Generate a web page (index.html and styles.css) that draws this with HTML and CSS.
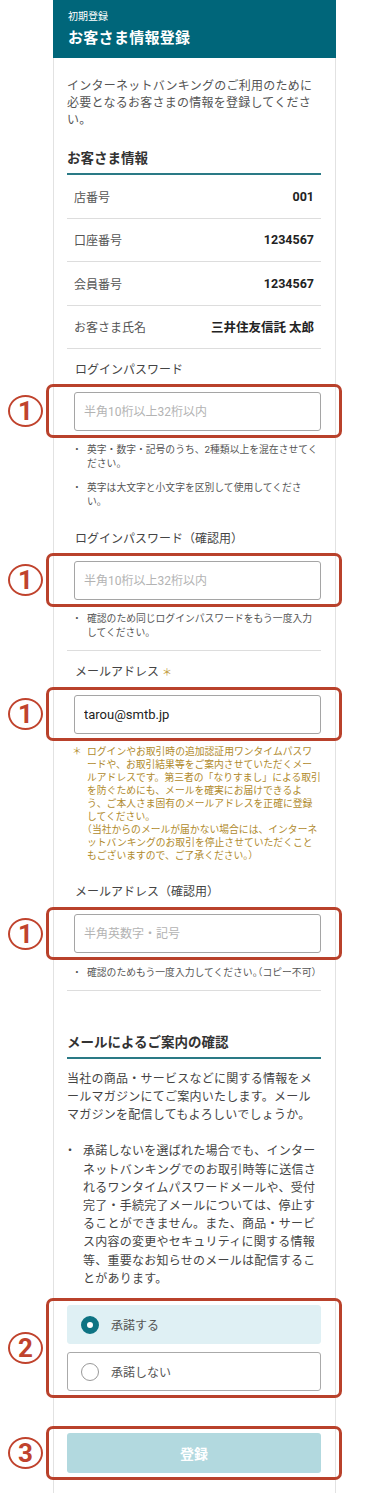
FILE: index.html
```html
<!DOCTYPE html>
<html lang="ja">
<head>
    <meta charset="UTF-8">
    <meta name="viewport" content="width=device-width, initial-scale=1.0">
    <title>お客さま情報登録</title>
    <link rel="stylesheet" href="styles.css">
</head>
<body>
    <div class="panel">
        <div class="panel-head">
            <p class="head-sub">初期登録</p>
            <h1 class="head-title">お客さま情報登録</h1>
        </div>

        <div class="panel-body">
            <p class="intro">インターネットバンキングのご利用のために必要となるお客さまの情報を登録してください。</p>

            <h2 class="sec-title">お客さま情報</h2>
            <dl class="info">
                <div class="info-row"><dt>店番号</dt><dd>001</dd></div>
                <div class="info-row"><dt>口座番号</dt><dd>1234567</dd></div>
                <div class="info-row"><dt>会員番号</dt><dd>1234567</dd></div>
                <div class="info-row"><dt>お客さま氏名</dt><dd>三井住友信託 太郎</dd></div>
            </dl>

            <div class="field-block">
                <div class="field">
                    <label class="field-label" for="pw">ログインパスワード</label>
                    <div class="mark">
                        <span class="mark-no">1</span>
                        <input class="text-input" type="password" id="pw" placeholder="半角10桁以上32桁以内">
                    </div>
                    <ul class="notes">
                        <li><span class="dot">・</span><span>英字・数字・記号のうち、2種類以上を混在させてください。</span></li>
                        <li><span class="dot">・</span><span>英字は大文字と小文字を区別して使用してください。</span></li>
                    </ul>
                </div>
                <div class="field">
                    <label class="field-label" for="pw2">ログインパスワード（確認用）</label>
                    <div class="mark">
                        <span class="mark-no">1</span>
                        <input class="text-input" type="password" id="pw2" placeholder="半角10桁以上32桁以内">
                    </div>
                    <ul class="notes">
                        <li><span class="dot">・</span><span>確認のため同じログインパスワードをもう一度入力してください。</span></li>
                    </ul>
                </div>
            </div>

            <div class="field-block">
                <div class="field">
                    <label class="field-label" for="mail">メールアドレス <span class="req">＊</span></label>
                    <div class="mark">
                        <span class="mark-no">1</span>
                        <input class="text-input" type="email" id="mail" value="tarou@smtb.jp">
                    </div>
                    <ul class="notes caution">
                        <li>
                            <span class="dot">＊</span>
                            <div>
                                <p>ログインやお取引時の追加認証用ワンタイムパスワードや、お取引結果等をご案内させていただくメールアドレスです。第三者の「なりすまし」による取引を防ぐためにも、メールを確実にお届けできるよう、ご本人さま固有のメールアドレスを正確に登録してください。</p>
                                <p class="aside">（当社からのメールが届かない場合には、インターネットバンキングのお取引を停止させていただくこともございますので、ご了承ください。）</p>
                            </div>
                        </li>
                    </ul>
                </div>
                <div class="field">
                    <label class="field-label" for="mail2">メールアドレス（確認用）</label>
                    <div class="mark">
                        <span class="mark-no">1</span>
                        <input class="text-input" type="email" id="mail2" placeholder="半角英数字・記号">
                    </div>
                    <ul class="notes">
                        <li><span class="dot">・</span><span>確認のためもう一度入力してください<span class="half">。（</span>コピー不可<span class="half">）</span></span></li>
                    </ul>
                </div>
            </div>

            <h2 class="sec-title sec-mail">メールによるご案内の確認</h2>
            <p class="lead">当社の商品・サービスなどに関する情報をメールマガジンにてご案内いたします。メールマガジンを配信してもよろしいでしょうか。</p>
            <ul class="lead-list">
                <li><span class="dot">・</span><span>承諾しないを選ばれた場合でも、インターネットバンキングでのお取引時等に送信されるワンタイムパスワードメールや、受付完了・手続完了メールについては、停止することができません。また、商品・サービス内容の変更やセキュリティに関する情報等、重要なお知らせのメールは配信することがあります。</span></li>
            </ul>

            <div class="mark mark-choices">
                <span class="mark-no">2</span>
                <div class="choices">
                    <label class="choice is-checked"><input type="radio" name="magazine" checked>承諾する</label>
                    <label class="choice"><input type="radio" name="magazine">承諾しない</label>
                </div>
            </div>

            <div class="mark mark-submit">
                <span class="mark-no">3</span>
                <button class="submit" disabled>登録</button>
            </div>
        </div>
    </div>

    <script>
        document.querySelectorAll(".choice input").forEach(function(radio) {
            radio.addEventListener("change", function() {
                document.querySelectorAll(".choice").forEach(function(c) {
                    c.classList.toggle("is-checked", c.querySelector("input").checked);
                });
            });
        });
    </script>
</body>
</html>
```

FILE: styles.css
```css
* {
    box-sizing: border-box;
}
body {
    margin: 0;
    font-family: Roboto, "Noto Sans CJK JP", sans-serif;
    color: #444;
    background: #fff;
    line-break: loose;
}
p, h1, h2, ul, dl, dd {
    margin: 0;
    padding: 0;
}
.panel {
    width: 283px;
    margin-left: 53px;
}
.panel-head {
    height: 58px;
    padding: 9px 0 0 15px;
    background: #00667a;
    color: #fff;
}
.head-sub {
    font-size: 10px;
    line-height: 16px;
}
.head-title {
    margin-top: 1px;
    font-size: 15px;
    line-height: 24px;
    font-weight: 700;
    letter-spacing: 0.3px;
}
.panel-body {
    padding: 19.5px 14px 20px 13px;
    border-left: 1px solid #e2e2e2;
    border-right: 1px solid #e2e2e2;
}
.intro {
    font-size: 12px;
    line-height: 17px;
    letter-spacing: 0.25px;
    color: #555;
}
.sec-title {
    margin-top: 19.5px;
    padding-bottom: 4px;
    border-bottom: 2px solid #2a7a86;
    font-size: 13.5px;
    line-height: 21px;
    font-weight: 700;
    color: #333;
}
.info-row {
    display: flex;
    justify-content: space-between;
    align-items: center;
    height: 43.5px;
    padding: 0 7px;
    border-bottom: 1px solid #ddd;
}
.info dt {
    font-size: 12px;
    color: #555;
}
.info dd {
    font-size: 12.5px;
    font-weight: 700;
    color: #222;
}
.field-block {
    margin-top: 11.5px;
    padding-bottom: 11px;
    border-bottom: 1px solid #ddd;
}
.field + .field {
    margin-top: 21.5px;
}
.field-label {
    display: block;
    padding-left: 8px;
    font-size: 12px;
    line-height: 18px;
    color: #444;
}
.req {
    font-size: 10px;
    color: #c29a3c;
}
.mark {
    position: relative;
    margin-top: 13px;
}
.mark::before {
    content: "";
    position: absolute;
    top: -7.5px;
    bottom: -7px;
    left: -21px;
    right: -21px;
    border: 3px solid #b9412b;
    border-radius: 7px;
    pointer-events: none;
}
.mark-no {
    position: absolute;
    left: -59px;
    top: 50%;
    width: 35px;
    height: 32px;
    margin-top: -16px;
    display: flex;
    align-items: center;
    justify-content: center;
    border: 2px solid #c0432d;
    border-radius: 50%;
    color: #c0432d;
    font-size: 26px;
    font-weight: 700;
    line-height: 1;
}
.text-input {
    display: block;
    width: calc(100% - 7px);
    height: 39px;
    margin-left: 7px;
    padding: 0 9px;
    border: 1px solid #a5a5a5;
    border-radius: 3px;
    font-family: inherit;
    font-size: 13px;
    color: #222;
    background: #fff;
}
.text-input::placeholder {
    font-size: 12px;
    color: #b3b3b3;
}
.notes {
    margin-top: 12.5px;
    padding-left: 7px;
    list-style: none;
    font-size: 9.8px;
    line-height: 13.5px;
    color: #555;
}
.notes li {
    display: flex;
}
.notes li + li {
    margin-top: 11px;
}
.notes .dot {
    flex: none;
    width: 15px;
    margin-left: -2px;
}
.notes.caution {
    margin-top: 11px;
    line-height: 13px;
    color: #b08a2c;
}
.notes .aside {
    text-indent: -0.5em;
}
.half {
    font-feature-settings: "halt";
}
.sec-mail {
    margin-top: 41px;
}
.lead {
    margin-top: 10.5px;
    font-size: 12px;
    line-height: 18.3px;
    letter-spacing: 0.25px;
    color: #444;
}
.lead-list {
    margin-top: 18px;
    list-style: none;
    font-size: 12px;
    line-height: 18.2px;
    letter-spacing: 0.25px;
    color: #444;
}
.lead-list li {
    display: flex;
}
.lead-list .dot {
    flex: none;
    width: 19px;
    margin-left: -3px;
}
.mark-choices {
    margin-top: 17px;
}
.choices {
    display: flex;
    flex-direction: column;
    gap: 8px;
}
.choice {
    display: flex;
    align-items: center;
    gap: 12px;
    height: 39px;
    padding-left: 13px;
    border: 1px solid #aaa;
    border-radius: 3px;
    font-size: 12px;
    color: #555;
    cursor: pointer;
}
.choice.is-checked {
    background: #dff0f4;
    border-color: #dff0f4;
}
.choice input {
    appearance: none;
    flex: none;
    width: 18px;
    height: 18px;
    margin: 0;
    border: 1px solid #999;
    border-radius: 50%;
    background: #fff;
}
.choice input:checked {
    border: 6px solid #0e7383;
}
.mark-submit {
    margin-top: 42px;
}
.submit {
    display: block;
    width: 100%;
    height: 40px;
    border: none;
    border-radius: 3px;
    background: #b2d9df;
    color: #fff;
    font-family: inherit;
    font-size: 14px;
    font-weight: 700;
}
```
